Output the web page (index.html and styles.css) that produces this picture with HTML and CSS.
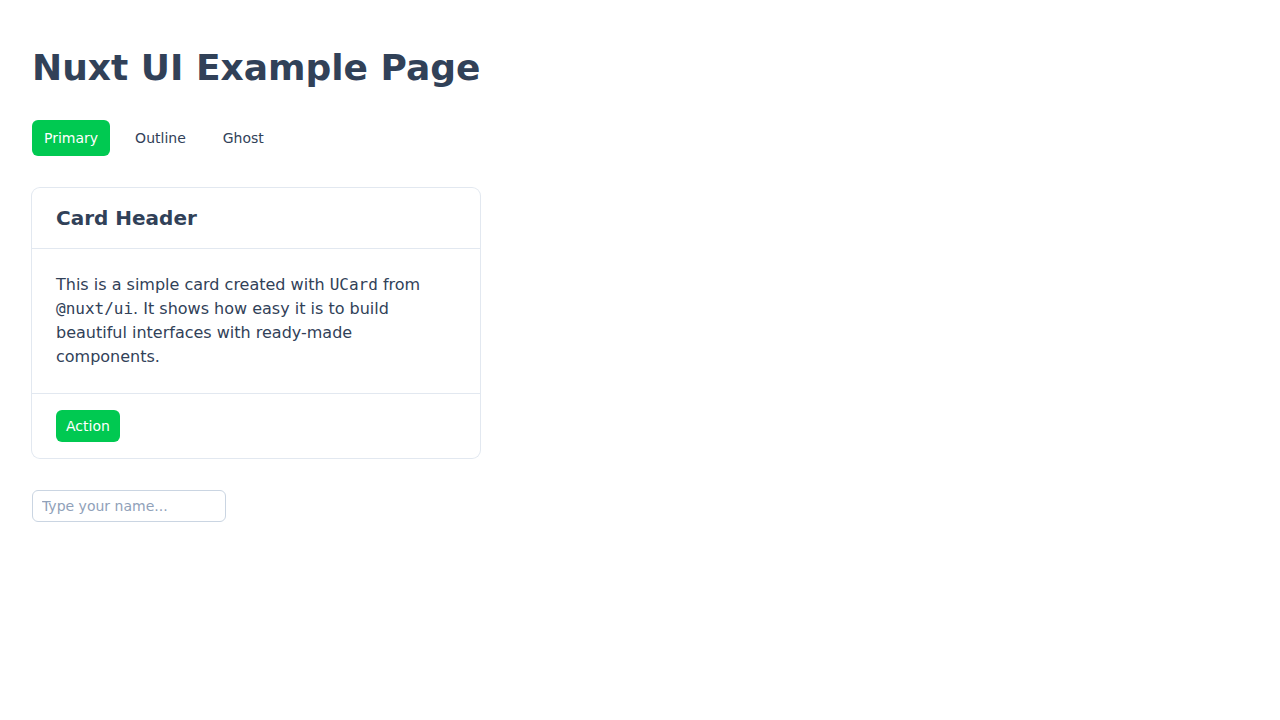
FILE: index.html
```html
<!DOCTYPE html>
<html lang="en">
<head>
<meta charset="utf-8">
<title>Nuxt UI Example Page</title>
<link rel="stylesheet" href="styles.css">
</head>
<body>
<main class="page">
  <h1 class="title">Nuxt UI Example Page</h1>
  <div class="button-row">
    <button class="btn btn-primary">Primary</button>
    <button class="btn btn-outline">Outline</button>
    <button class="btn btn-ghost">Ghost</button>
  </div>
  <section class="card">
    <header class="card-header">
      <h2 class="card-title">Card Header</h2>
    </header>
    <div class="card-body">
      <p class="card-text">This is a simple card created with <code class="mono">UCard</code> from <code class="mono">@nuxt/ui</code>. It shows how easy it is to build beautiful interfaces with ready-made components.</p>
    </div>
    <footer class="card-footer">
      <button class="btn btn-primary btn-sm">Action</button>
    </footer>
  </section>
  <input class="text-input" type="text" placeholder="Type your name...">
</main>
</body>
</html>
```
FILE: styles.css
```css
* {
  box-sizing: border-box;
}

html, body {
  margin: 0;
  padding: 0;
  background: #ffffff;
}

body {
  font-family: "DejaVu Sans", "Liberation Sans", sans-serif;
  color: #314158;
}

.page {
  padding: 48px 32px 32px;
  display: flex;
  flex-direction: column;
  align-items: flex-start;
}

.title {
  margin: 0;
  font-size: 36px;
  line-height: 40px;
  font-weight: 700;
  color: #314158;
}

.button-row {
  display: flex;
  gap: 13px;
  margin-top: 32px;
}

.btn {
  font-family: inherit;
  font-size: 14px;
  line-height: 20px;
  padding: 8px 12px;
  border: none;
  border-radius: 6px;
  background: transparent;
  color: #314158;
  cursor: pointer;
}

.btn-primary {
  background: #00c951;
  color: #ffffff;
}

.btn-sm {
  padding: 6px 10px;
}

.card {
  margin-top: 32px;
  width: 448px;
  border-radius: 8px;
  background: #ffffff;
  box-shadow: 0 0 0 1px #e2e8f0;
}

.card-header {
  padding: 16px 24px;
  border-bottom: 1px solid #e2e8f0;
}

.card-title {
  margin: 0;
  font-size: 20px;
  line-height: 28px;
  font-weight: 700;
  color: #314158;
}

.card-body {
  padding: 24px;
  border-bottom: 1px solid #e2e8f0;
}

.card-text {
  margin: 0;
  font-size: 16px;
  line-height: 24px;
  color: #314158;
}

.mono {
  font-family: "DejaVu Sans Mono", "Liberation Mono", monospace;
  font-size: 16px;
}

.card-footer {
  padding: 16px 24px;
}

.text-input {
  margin-top: 32px;
  width: 194px;
  height: 32px;
  padding: 6px 9px;
  font-family: inherit;
  font-size: 14px;
  color: #314158;
  border: 1px solid #cad5e2;
  border-radius: 6px;
  background: #ffffff;
  outline: none;
}

.text-input::placeholder {
  color: #90a1b9;
}
```
